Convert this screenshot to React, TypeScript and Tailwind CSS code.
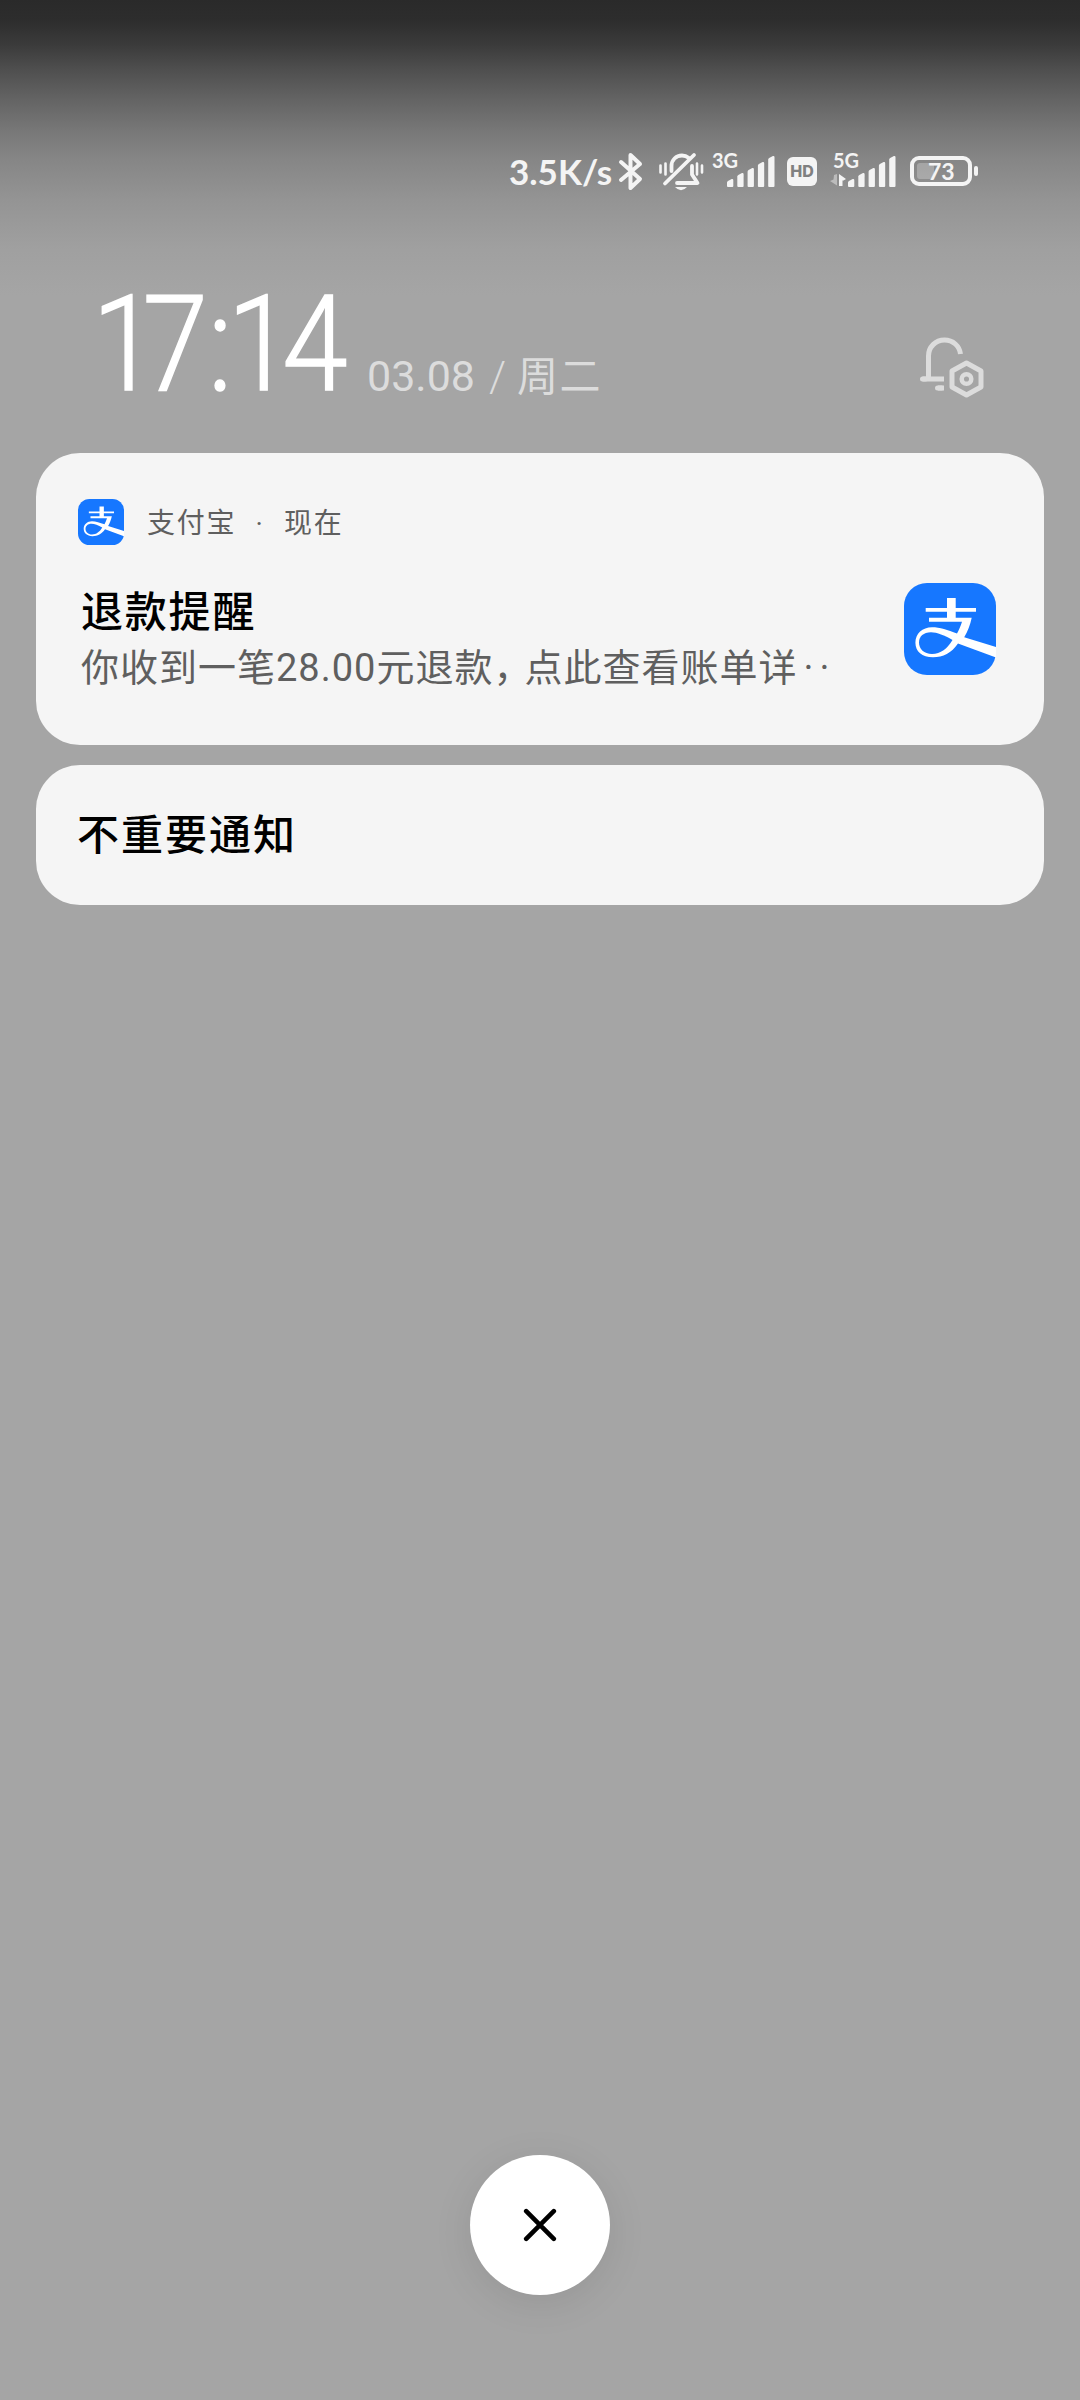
import type { ReactNode } from "react";

function AlipayLogo({ className }: { className?: string }) {
  return (
    <svg viewBox="0 0 92 92" className={className}>
      <rect width="92" height="92" rx="23" fill="#1677ff" />
      <path
        d="M43 15h8.700v10H72v3.700H51.700v6h16c-1.500 7-4 13.500-7.500 19.500L92 64v10.500L54 60.500C47.500 70 39 74.300 29 74.300c-11 0-17.600-6-17.600-14.600 0-9 7-15.400 16.600-15.400 8 0 15.500 2.700 25 6.200 2-3.500 3.800-7.800 5-11.800H25v-4h18v-6H21.700V25H43z"
        fill="#fff"
      />
      <path
        d="M48.500 57C40.500 52.500 33 49.300 27 49.300c-7.500 0-12 4.200-12 10.200 0 6.500 5 11.500 13 11.500 8.500 0 15.500-5.500 20.500-14z"
        fill="#1677ff"
      />
    </svg>
  );
}

function BluetoothIcon() {
  return (
    <svg
      viewBox="0 0 26 40"
      className="h-10 w-[26px]"
      fill="none"
      stroke="currentColor"
      strokeWidth="4"
      strokeLinecap="round"
      strokeLinejoin="round"
    >
      <path d="M3 11l19 17-9.500 9V4L22 13 3 29" />
    </svg>
  );
}

function MutedBellIcon() {
  return (
    <svg
      viewBox="0 0 46 40"
      className="ml-[14px] h-10 w-[46px]"
      fill="none"
      stroke="currentColor"
      strokeWidth="3.800"
      strokeLinecap="round"
      strokeLinejoin="round"
    >
      <path d="M13.500 20v-5c0-6 4.500-10.500 10.500-10.500 3 0 5 1 7 2.500M36 4L7 32.500" />
      <path d="M34 15v8.500l5.500 8.500H19" />
      <path d="M2.500 14.500v7M7.500 12.500v11M39 12.500v11M44 14.500v7" strokeWidth="2.600" />
      <path d="M17 36h12q-6 6.500-12 0z" fill="currentColor" stroke="none" />
    </svg>
  );
}

const barHeights = [8, 14, 19, 25, 31];

function SignalBars() {
  return (
    <svg viewBox="0 0 48 32" className="h-8 w-12 shrink-0" fill="currentColor">
      {barHeights.map((h, i) => (
        <path
          key={h}
          d={`M${i * 10.3} ${35.5 - h}q0-1 1-1.600l3.700-1.900q1.600-.4 1.600 1.200V31q0 1-1 1h-4.300q-1 0-1-1z`}
        />
      ))}
    </svg>
  );
}

function NetworkLabel({ text, children }: { text: string; children?: ReactNode }) {
  return (
    <div className="flex w-[15px] flex-col self-start pt-0.5">
      <span className="font-['Lato',sans-serif] text-[20px] leading-5 font-bold whitespace-nowrap">
        {text}
      </span>
      {children}
    </div>
  );
}

function DataArrows() {
  return (
    <svg viewBox="0 0 16 12" className="mt-1 -ml-[3px] h-3 w-4" fill="currentColor">
      <path d="M7 0v11.500L0 7l3.500-1.500L4 1z" opacity=".45" />
      <path d="M9 12V0l7 5-2.500 1.500H12.500V12z" />
    </svg>
  );
}

function StatusBar() {
  return (
    <div className="flex h-[46px] items-center pl-[509px] text-[#f4f4f4]">
      <span className="w-[109px] font-['Lato',sans-serif] text-[35px] leading-[46px] font-bold whitespace-nowrap">
        3.5K/s
      </span>
      <BluetoothIcon />
      <MutedBellIcon />
      <div className="w-2" />
      <NetworkLabel text="3G" />
      <SignalBars />
      <span className="mr-4 ml-3 flex h-[29px] w-[30px] items-center justify-center rounded-md bg-[#f4f4f4] font-['Inter',sans-serif] text-base font-extrabold text-[#808080]">
        HD
      </span>
      <NetworkLabel text="5G">
        <DataArrows />
      </NetworkLabel>
      <SignalBars />
      <div className="ml-[14px] flex h-[30px] w-[62px] items-center rounded-[9px] border-4 border-[#f4f4f4] p-[3px]">
        <div className="h-4 w-[17px] rounded-l-[3px] bg-white/25" />
        <span className="-ml-[6px] font-['Lato',sans-serif] text-[23px] leading-4 font-bold">73</span>
      </div>
      <span className="ml-0.5 h-[10px] w-1 rounded-sm bg-[#f4f4f4]" />
    </div>
  );
}

function NotificationSettingsIcon() {
  return (
    <svg
      viewBox="0 0 68 64"
      className="mt-[140px] mr-[94px] ml-auto h-16 w-[68px]"
      fill="none"
      stroke="#dcdcdc"
      strokeWidth="5"
      strokeLinecap="round"
      strokeLinejoin="round"
    >
      <path d="M10.500 44V22c0-9 7-16 16-16 8.500 0 15 6 16 14" strokeLinecap="butt" />
      <path d="M4.500 45H26" strokeLinecap="butt" />
      <path d="M4.500 45h3M19.500 54h4" />
      <path d="M20 54h6" strokeLinecap="butt" />
      <path d="M48.500 29l14.500 8v16l-14.500 8L34 53V37z" />
      <circle cx="48.500" cy="45" r="4.800" strokeWidth="4.500" />
    </svg>
  );
}

function Header() {
  return (
    <header className="flex h-[259px] items-start">
      <h1 className="mt-[83px] ml-[92px] w-[272px] origin-left scale-x-[0.88] font-['Roboto',sans-serif] text-[134px] leading-[136px] font-light whitespace-nowrap text-white [-webkit-text-stroke:1.5px_white]">
        <span className="tracking-[-17px]">1</span>
        <span>7</span>
        <span className="tracking-[-6px]">:</span>
        <span className="tracking-[-12px]">1</span>
        <span>4</span>
      </h1>
      <p className="mt-[152px] ml-[3px] font-['Roboto','Noto_Sans_CJK_SC',sans-serif] text-[43px] leading-[60px] whitespace-nowrap text-[#dcdcdc]">
        03.08<span className="ml-[14px] font-light">/</span>
        <span className="ml-[11px] text-[41px] tracking-[1.5px]">周二</span>
      </p>
      <NotificationSettingsIcon />
    </header>
  );
}

export default function App() {
  return (
    <div className="flex h-[2400px] w-[1080px] flex-col bg-[#a5a5a5] bg-[linear-gradient(180deg,#2a2a2a_0px,#2d2d2d_20px,#3b3b3b_45px,#4f4f4f_70px,#646464_100px,#777_130px,#868686_160px,#949494_200px,#a0a0a0_250px,#a5a5a5_295px)] bg-no-repeat pt-[148px] font-['Roboto','Noto_Sans_CJK_SC',sans-serif]">
      <StatusBar />
      <Header />
      <section className="mx-9 h-[292px] rounded-[44px] bg-[#f5f5f5] px-[42px] pt-[46px]">
        <div className="flex h-[46px] items-center text-[28px] leading-[46px] tracking-[1.7px] text-[#5f5f5f]">
          <AlipayLogo className="size-[46px]" />
          <span className="ml-[23px] pt-[3px]">支付宝</span>
          <span className="w-[48px] pt-[3px] text-center">·</span>
          <span className="pt-[3px]">现在</span>
        </div>
        <div className="mt-[38px] flex items-start justify-between">
          <div className="pt-[2px] pl-[3px]">
            <p className="text-[42px] leading-[56px] font-medium tracking-[1.8px] text-black">
              退款提醒
            </p>
            <p className="text-[38px] leading-[55px] tracking-[1px] whitespace-nowrap text-[#5f5f5f]">
              你收到一笔28.00元退款<span className="tracking-[-7px]">，</span>点此查看账单详
              <span className="ml-[6px] tracking-[6px]">··</span>
            </p>
          </div>
          <AlipayLogo className="mr-[6px] size-[92px]" />
        </div>
      </section>
      <section className="mx-9 mt-5 flex h-[140px] items-center rounded-[44px] bg-[#f5f5f5] px-[41px] text-[42px] font-medium tracking-[2px] text-black">
        不重要通知
      </section>
      <button className="mx-auto mt-auto mb-[105px] flex size-[140px] items-center justify-center rounded-full bg-white shadow-[0_8px_40px_rgba(0,0,0,0.09)]">
        <svg viewBox="0 0 34 34" className="size-[34px]" stroke="#000" strokeWidth="4.600" strokeLinecap="round">
          <path d="M3.200 3.200l27.600 27.600M30.800 3.200L3.200 30.800" />
        </svg>
      </button>
    </div>
  );
}
